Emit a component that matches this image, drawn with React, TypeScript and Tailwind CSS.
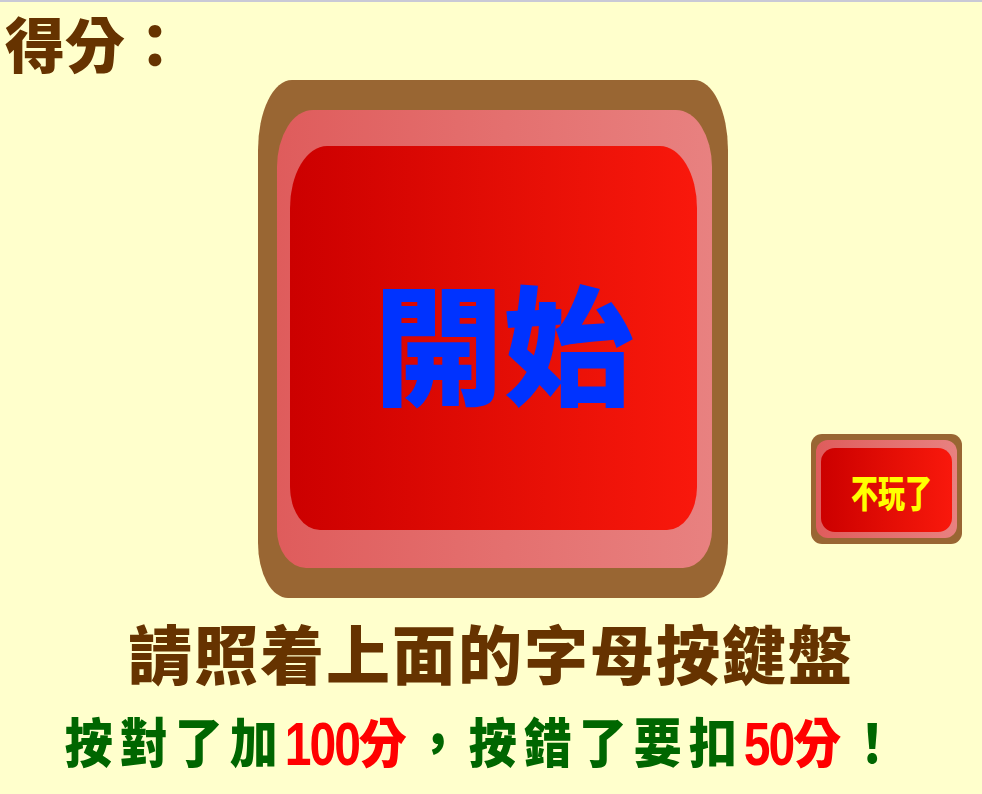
export default function App() {
  return (
    <div className="min-h-[794px] w-full bg-[#ffffcc] border-t-2 border-[#c9c9d6] font-['Noto_Sans_CJK_TC',sans-serif] font-black">
      {/* score */}
      <div className="h-[78px] pt-[4px] pl-[5px]">
        <div className="text-[60px] leading-[72px] text-[#663300]">得分：</div>
      </div>

      {/* buttons */}
      <div className="flex items-end pl-[258px]">
        <div className="flex h-[518px] w-[470px] rounded-t-[34px_70px] rounded-b-[30px_55px] bg-[#996633] pt-[30px] pl-[19px] pr-[16px] pb-[30px]">
          <div className="flex flex-1 rounded-t-[36px_57px] rounded-b-[29px_38px] bg-linear-to-r from-[#df5c5c] to-[#e88180] pt-[36px] pl-[13px] pr-[15px] pb-[38px]">
            <div className="flex flex-1 items-center justify-center rounded-t-[37px_62px] rounded-b-[30px_43px] bg-linear-to-r from-[#cc0000] to-[#f9180c] pl-5">
              <span className="text-[130px] leading-none text-[#0033ff]">開始</span>
            </div>
          </div>
        </div>

        <div className="ml-[83px] mb-[54px] flex h-[110px] w-[151px] rounded-[11px] bg-[#996633] pt-[6px] pl-[5px] pr-[5px] pb-[6px]">
          <div className="flex flex-1 rounded-[12px] bg-linear-to-r from-[#df5c5c] to-[#e88180] pt-[8px] pl-[5px] pr-[5px] pb-[6px]">
            <div className="flex flex-1 items-center justify-center rounded-[14px] bg-linear-to-r from-[#cc0000] to-[#f9180c] pl-[10px]">
              <span className="inline-block scale-y-[1.4] text-[27px] leading-none text-[#ffff00]">不玩了</span>
            </div>
          </div>
        </div>
      </div>

      {/* instructions */}
      <p className="mt-[21px] text-center text-[64px] leading-none tracking-[2px] text-[#663300]">
        請照着上面的字母按鍵盤
      </p>
      <p className="mt-[33px] flex justify-center pr-[14px] text-[48px] leading-none">
        <span className="inline-block scale-y-[1.12] whitespace-nowrap">
          <span className="tracking-[7px] text-[#006600]">按對了加</span>
          <span className="inline-block scale-y-[1.12] font-['Liberation_Sans',sans-serif] font-bold tracking-[-2px] text-[#ff0000]">100</span>
          <span className="tracking-[7px] text-[#ff0000]">分</span>
          <span className="tracking-[7px] text-[#006600]">，按錯了要扣</span>
          <span className="inline-block scale-y-[1.12] font-['Liberation_Sans',sans-serif] font-bold tracking-[-2px] text-[#ff0000]">50</span>
          <span className="tracking-[7px] text-[#ff0000]">分</span>
          <span className="tracking-[7px] text-[#006600]">！</span>
        </span>
      </p>
    </div>
  );
}
